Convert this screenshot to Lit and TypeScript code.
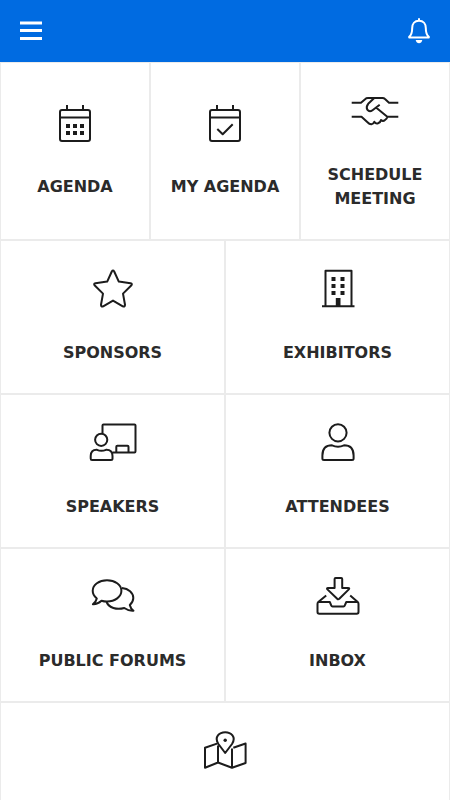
import { LitElement, html, svg, css } from "lit";
import { customElement } from "lit/decorators.js";
import { classMap } from "lit/directives/class-map.js";

type Tile = { label: string; name?: string; size: "third" | "half" | "full"; icon: unknown };

const calendar = svg`
  <rect x="9" y="7" width="30" height="31" rx="2"/>
  <path d="M9 14.5H39M16 2V7M32 2V7"/>`;

const tiles: Tile[] = [
  {
    label: "AGENDA",
    size: "third",
    icon: svg`${calendar}
      <path class="solid" d="M15 21h4v4h-4zM22 21h4v4h-4zM29 21h4v4h-4zM15 28h4v4h-4zM22 28h4v4h-4zM29 28h4v4h-4z"/>`,
  },
  { label: "MY AGENDA", size: "third", icon: svg`${calendar}<path d="M16.3 26L21.7 31.3L31.7 21.3"/>` },
  {
    label: "SCHEDULE MEETING",
    size: "third",
    icon: svg`<path d="M.7 11.7H10L15.3 7.2Q16 7 17 7H31.5Q33 7 34 8L38 11.7H47.3M.7 25.7H10.5L16.5 31.3Q18.5 33.4 20.5 33.2Q22.5 33 23.3 30.8Q25 33.3 27 32.3Q29.5 31.5 30 29Q32 30.8 34 29Q36.2 27.5 36.3 25.7H47.3M23 7.3L17.2 12.8Q14.8 16 16.3 18.7Q18.5 21.5 21.5 19.2L28.7 13.7M25.3 16.7L36.3 25.7"/>`,
  },
  {
    label: "SPONSORS",
    size: "half",
    icon: svg`<path d="M22.8 2.5Q24 .6 25.2 2.5L29.8 12.6L41.5 14.2Q43.8 14.8 42.2 16.5L34 24.6L36 35.8Q36 38.2 33.8 37.3L24 31.6L14.2 37.3Q12 38.2 12 35.8L14 24.6L5.8 16.5Q4.2 14.8 6.5 14.2L18.2 12.6Z"/>`,
  },
  {
    label: "EXHIBITORS",
    size: "half",
    icon: svg`<path d="M11.5 37V1.8H37.5V37M8 37.2H40.5"/>
      <path class="solid" d="M17.5 8h4v4h-4zM26.5 8h4v4h-4zM17.5 15h4v4h-4zM26.5 15h4v4h-4zM17.5 22h4v4h-4zM26.5 22h4v4h-4zM21.8 29h4.7v8h-4.7z"/>`,
  },
  {
    label: "SPEAKERS",
    size: "half",
    icon: svg`<circle cx="12.2" cy="16.8" r="6.1"/>
      <path d="M13.5 10.5V2.5Q13.5 1.5 14.5 1.5H45.5Q46.5 1.5 46.5 2.5V28.3Q46.5 29.5 45.5 29.5H23.5M27.3 29.5V23.7Q27.3 22.8 28.3 22.8H38.5Q39.5 22.8 39.5 23.7V29.5M8 26.8Q12.3 28.8 17 26.8Q23.5 26.5 23.5 33V35.5Q23.5 37 22 37H3Q1.7 37 1.7 35.5V33Q1.7 26.5 8 26.8Z"/>`,
  },
  {
    label: "ATTENDEES",
    size: "half",
    icon: svg`<circle cx="24" cy="9.8" r="8.6"/>
      <path d="M18 22.3Q24 25 30 22.3Q39.6 22.3 39.6 32.5V35.5Q39.6 37 38 37H10Q8.4 37 8.4 35.5V32.5Q8.4 22.3 18 22.3Z"/>`,
  },
  {
    label: "PUBLIC FORUMS",
    size: "half",
    icon: svg`<path d="M7.8 21.5Q3.7 18.2 3.7 13.8C3.7 7.8 10.1 3.2 18 3.2S32.4 7.8 32.4 13.8S26 24.5 18 24.5Q15 24.5 12.5 23.7Q8.3 27.5 3.9 27.2Q7.2 24.5 7.8 21.5ZM33 11.1C39.5 11.6 44.3 15.8 44.3 21Q44.3 24.8 40.8 28Q41.5 31.5 44.5 33.7Q40 34.2 35.3 31C27.5 33.2 20 30.8 17.5 25"/>`,
  },
  {
    label: "INBOX",
    size: "half",
    icon: svg`<path d="M20.6 2Q20.6 1 21.6 1H27.2Q28.2 1 28.2 2V11H34Q36 11 34.8 12.4L25.3 21.8Q24.2 22.8 23.2 21.8L13.4 12.4Q12.4 11 14 11H20.6ZM12.2 18.5L4.3 25Q3.5 25.8 3.5 27V35Q3.5 36.8 5.3 36.8H42.7Q44.5 36.8 44.5 35V27Q44.5 25.8 43.7 25L36.2 18.5M4.3 25H15.8L17.3 28.7Q17.6 29.5 18.5 29.5H29.5Q30.4 29.5 30.7 28.7L32.3 25H43.7"/>`,
  },
  {
    label: "",
    name: "Map",
    size: "full",
    icon: svg`<path d="M16 12.6L4 16.8V36.7L17 31.5L31 36.7L44.6 32V12.5L32.3 16.7M17 14.5V31.5M31 17.5V36.7M24.2 22L17.4 13C12.8 6 18.5 1.2 24.2 1.2S35.6 6 31 13Z"/>
      <circle class="solid" cx="24.2" cy="9.3" r="1.7"/>`,
  },
];

@customElement("app-tile")
class AppTile extends LitElement {
  static properties = { tile: { attribute: false } };
  declare tile: Tile;

  static styles = css`
    :host { display: flex; }
    .tile {
      flex: 1;
      box-sizing: border-box;
      min-width: 0;
      min-height: 154px;
      padding: 28px 8px;
      border: 1px solid #ebebeb;
      background: #fff;
      color: #2b2b2b;
      display: flex;
      flex-direction: column;
      align-items: center;
      justify-content: center;
      gap: 32px;
      text-decoration: none;
      text-align: center;
      font: bold 16px/24px Verdana, "DejaVu Sans", sans-serif;
    }
    .bare { justify-content: flex-start; }
    .icon {
      flex: none;
      width: 48px;
      height: 40px;
      fill: none;
      stroke: #1c1c1c;
      stroke-width: 2;
      stroke-linejoin: round;
    }
    .solid { fill: #1c1c1c; stroke: none; }
  `;

  render() {
    const { label, name, icon } = this.tile;
    return html`<a class=${classMap({ tile: true, bare: !label })} href="#" aria-label=${name ?? label}>
      <svg class="icon" viewBox="0 0 48 40" aria-hidden="true">${icon}</svg>
      ${label ? html`<span>${label}</span>` : ""}
    </a>`;
  }
}

@customElement("app-root")
class AppRoot extends LitElement {
  static styles = css`
    :host {
      display: block;
      height: 100vh;
      overflow: hidden;
      background: #fff;
    }
    .bar {
      display: flex;
      align-items: center;
      justify-content: space-between;
      height: 62px;
      padding: 0 20px;
      background: #006be1;
    }
    .action {
      display: flex;
      padding: 0;
      border: 0;
      background: none;
      color: #fff;
      cursor: pointer;
    }
    .glyph {
      width: 22px;
      height: 26px;
      fill: none;
      stroke: currentColor;
      stroke-width: 2;
      stroke-linejoin: round;
    }
    .lines { stroke-width: 3; }
    .clapper { fill: currentColor; stroke: none; }
    .grid {
      display: grid;
      grid-template-columns: repeat(6, minmax(0, 1fr));
    }
    .third { grid-column: span 2; }
    .half { grid-column: span 3; }
    .full { grid-column: span 6; }
  `;

  render() {
    return html`
      <header class="bar">
        <button class="action" aria-label="Menu">
          <svg class="glyph" viewBox="0 0 22 26"><path class="lines" d="M0 5H22M0 12.5H22M0 20.5H22"/></svg>
        </button>
        <button class="action" aria-label="Notifications">
          <svg class="glyph" viewBox="0 0 22 26">
            <path d="M11 .3V3M11 2.7C6.5 2.7 4.2 6 4.2 10C4.2 15 3 17.3 1.2 18.7V19.5H20.8V18.7C19 17.3 17.8 15 17.8 10C17.8 6 15.5 2.7 11 2.7Z"/>
            <path class="clapper" d="M7.7 22H14.3Q13.5 25.3 11 25.3T7.7 22Z"/>
          </svg>
        </button>
      </header>
      <nav class="grid">
        ${tiles.map((t) => html`<app-tile class=${t.size} .tile=${t}></app-tile>`)}
      </nav>
    `;
  }
}
